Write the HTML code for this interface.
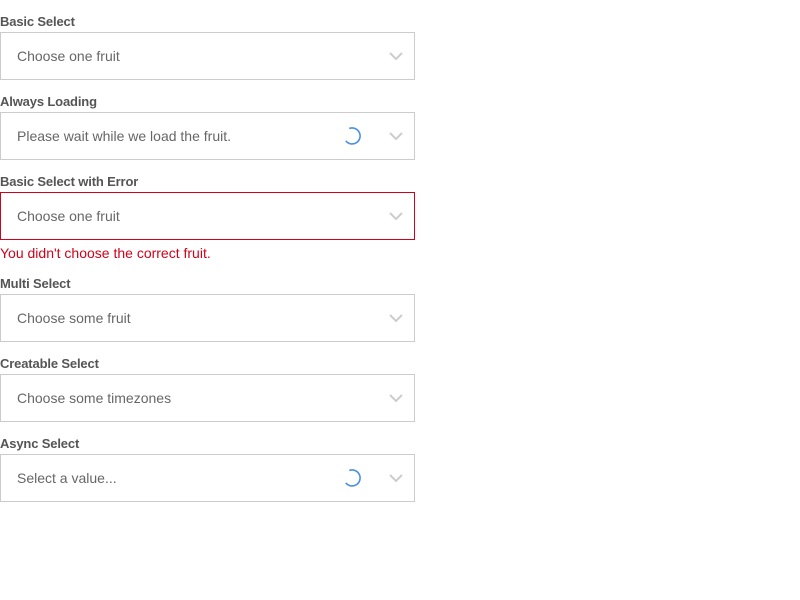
<!DOCTYPE html>
<html><head><style>
body{margin:0;background:#fff;font-family:"Liberation Sans",sans-serif;}
.l{position:absolute;left:0;font-size:13px;font-weight:bold;color:#555;line-height:16px;letter-spacing:-0.15px;}
.b{position:absolute;left:0;width:413px;height:46px;border:1px solid #ccc;}
.b.e{border-color:#d0021b;}
.t{position:absolute;left:16px;top:15px;font-size:14px;color:#666;line-height:16px;}
.c{position:absolute;left:387px;top:16px;}
.s{position:absolute;left:341px;top:13px;}
.err{position:absolute;left:0;top:245px;font-size:14px;color:#d0021b;line-height:16px;}
</style></head><body>
<div class="l" style="top:14px">Basic Select</div>
<div class="b" style="top:32px"><div class="t">Choose one fruit</div><svg class="c" width="16" height="14"><path d="M2 4l6 6 6-6" fill="none" stroke="#ccc" stroke-width="2"/></svg></div>
<div class="l" style="top:94px">Always Loading</div>
<div class="b" style="top:112px"><div class="t">Please wait while we load the fruit.</div><svg class="s" width="20" height="20"><path d="M10 2a8 8 0 1 1-7.5 10.5" fill="none" stroke="#4a90e2" stroke-width="1.6" transform="rotate(-20 10 10)"/></svg><svg class="c" width="16" height="14"><path d="M2 4l6 6 6-6" fill="none" stroke="#ccc" stroke-width="2"/></svg></div>
<div class="l" style="top:174px">Basic Select with Error</div>
<div class="b e" style="top:192px"><div class="t">Choose one fruit</div><svg class="c" width="16" height="14"><path d="M2 4l6 6 6-6" fill="none" stroke="#ccc" stroke-width="2"/></svg></div>
<div class="err">You didn't choose the correct fruit.</div>
<div class="l" style="top:276px">Multi Select</div>
<div class="b" style="top:294px"><div class="t">Choose some fruit</div><svg class="c" width="16" height="14"><path d="M2 4l6 6 6-6" fill="none" stroke="#ccc" stroke-width="2"/></svg></div>
<div class="l" style="top:356px">Creatable Select</div>
<div class="b" style="top:374px"><div class="t">Choose some timezones</div><svg class="c" width="16" height="14"><path d="M2 4l6 6 6-6" fill="none" stroke="#ccc" stroke-width="2"/></svg></div>
<div class="l" style="top:436px">Async Select</div>
<div class="b" style="top:454px"><div class="t">Select a value...</div><svg class="s" width="20" height="20"><path d="M10 2a8 8 0 1 1-7.5 10.5" fill="none" stroke="#4a90e2" stroke-width="1.6" transform="rotate(-20 10 10)"/></svg><svg class="c" width="16" height="14"><path d="M2 4l6 6 6-6" fill="none" stroke="#ccc" stroke-width="2"/></svg></div>
</body></html>
